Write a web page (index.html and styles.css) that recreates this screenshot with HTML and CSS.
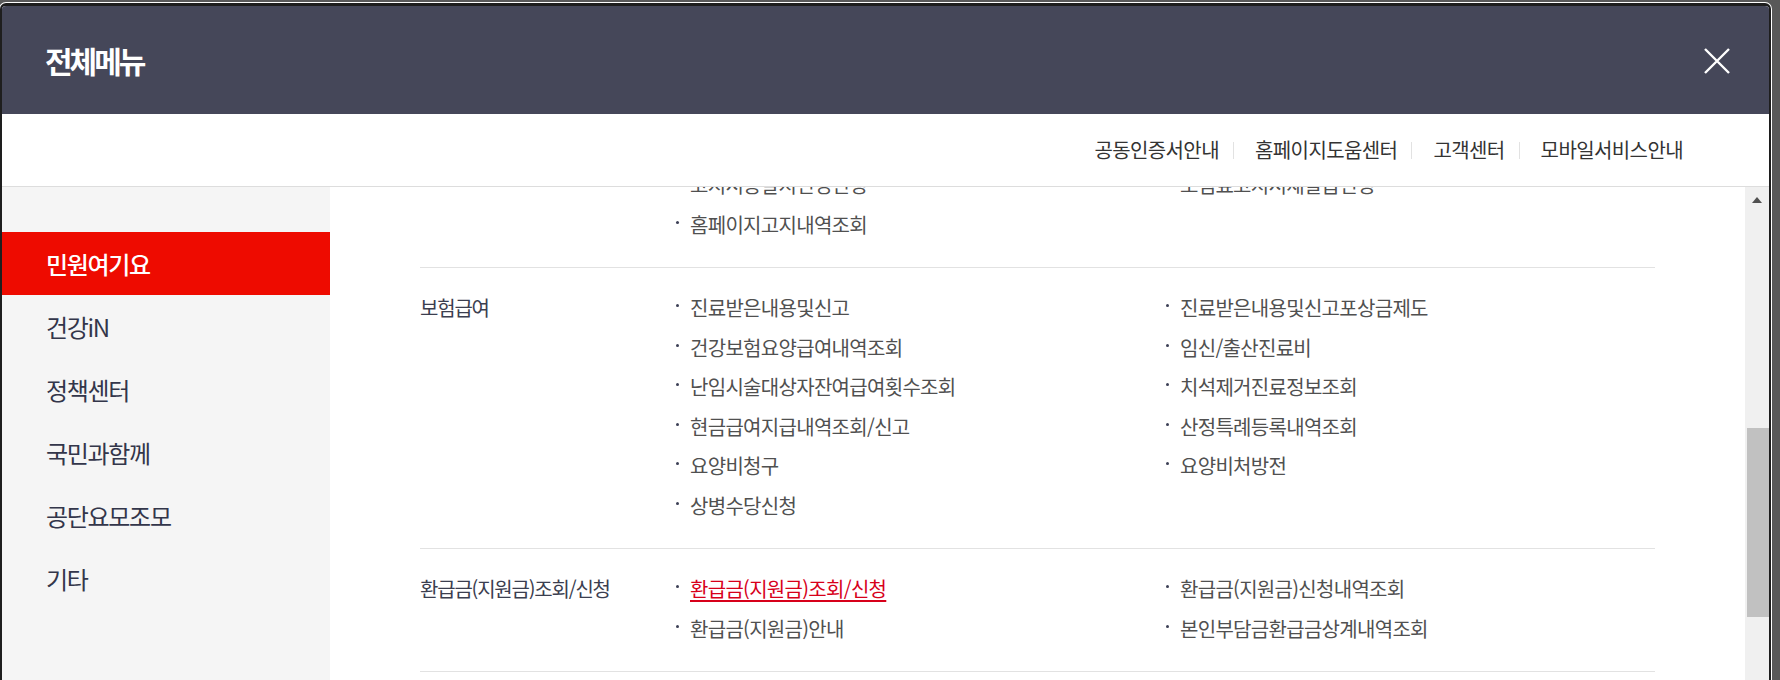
FILE: index.html
```html
<!DOCTYPE html>
<html lang="ko">
<head>
<meta charset="utf-8">
<title>전체메뉴</title>
<link rel="stylesheet" href="styles.css">
</head>
<body>
<div class="modal">
  <header class="modal-head">
    <h1 class="modal-title">전체메뉴</h1>
    <button class="close-btn" type="button" aria-label="닫기">
      <svg width="26" height="26" viewBox="0 0 26 26"><path d="M1 1L25 25M25 1L1 25" stroke="#fff" stroke-width="2.4" fill="none"/></svg>
    </button>
  </header>
  <nav class="util-bar">
    <a class="util-link">공동인증서안내</a><span class="sep"></span>
    <a class="util-link">홈페이지도움센터</a><span class="sep"></span>
    <a class="util-link">고객센터</a><span class="sep"></span>
    <a class="util-link">모바일서비스안내</a>
  </nav>
  <div class="modal-body">
    <aside class="side-nav">
      <ul>
        <li class="side-item active">민원여기요</li>
        <li class="side-item">건강iN</li>
        <li class="side-item">정책센터</li>
        <li class="side-item">국민과함께</li>
        <li class="side-item">공단요모조모</li>
        <li class="side-item">기타</li>
      </ul>
    </aside>
    <div class="menu-pane">
      <section class="menu-row first">
        <h2 class="row-label"></h2>
        <ul class="menu-col">
          <li>고지서송달지변경신청</li>
          <li>홈페이지고지내역조회</li>
        </ul>
        <ul class="menu-col">
          <li>보험료고지서재발급신청</li>
        </ul>
      </section>
      <section class="menu-row">
        <h2 class="row-label">보험급여</h2>
        <ul class="menu-col">
          <li>진료받은내용및신고</li>
          <li>건강보험요양급여내역조회</li>
          <li>난임시술대상자잔여급여횟수조회</li>
          <li>현금급여지급내역조회/신고</li>
          <li>요양비청구</li>
          <li>상병수당신청</li>
        </ul>
        <ul class="menu-col">
          <li>진료받은내용및신고포상금제도</li>
          <li>임신/출산진료비</li>
          <li>치석제거진료정보조회</li>
          <li>산정특례등록내역조회</li>
          <li>요양비처방전</li>
        </ul>
      </section>
      <section class="menu-row">
        <h2 class="row-label">환급금(지원금)조회/신청</h2>
        <ul class="menu-col">
          <li class="current">환급금(지원금)조회/신청</li>
          <li>환급금(지원금)안내</li>
        </ul>
        <ul class="menu-col">
          <li>환급금(지원금)신청내역조회</li>
          <li>본인부담금환급금상계내역조회</li>
        </ul>
      </section>
    </div>
    <div class="scrollbar">
      <span class="scroll-arrow"></span>
      <span class="scroll-thumb"></span>
    </div>
  </div>
</div>
</body>
</html>
```

FILE: styles.css
```css
* { box-sizing: border-box; }

html, body {
  margin: 0;
  padding: 0;
  height: 680px;
  overflow: hidden;
  background: #595959;
  font-family: "Noto Sans CJK KR", "Noto Sans", sans-serif;
}

ul { list-style: none; margin: 0; padding: 0; }

.modal {
  margin-top: 3px;
  width: 1771px;
  height: 720px;
  border: 2px solid #1e1e1e;
  border-top-width: 3px;
  border-radius: 6px 6px 0 0;
  box-shadow: 0 0 0 1px #ffffff;
  background: #fff;
  display: flex;
  flex-direction: column;
  overflow: hidden;
}

.modal-head {
  height: 108px;
  flex: none;
  background: #454759;
  display: flex;
  align-items: center;
  justify-content: space-between;
  padding: 0 39px 0 43px;
}

.modal-title {
  margin: 0;
  color: #fff;
  font-size: 30px;
  font-weight: 700;
  letter-spacing: -3px;
  line-height: 1;
}

.close-btn {
  display: block;
  width: 26px;
  height: 26px;
  padding: 0;
  border: 0;
  background: none;
  margin-top: 2px;
}
.close-btn svg { display: block; }

.util-bar {
  height: 73px;
  flex: none;
  display: flex;
  justify-content: flex-end;
  align-items: center;
  padding-right: 86px;
  border-bottom: 1px solid #dddddd;
}

.util-link {
  font-size: 20px;
  color: #333;
  letter-spacing: -0.6px;
  line-height: 1;
}

.sep {
  width: 1px;
  height: 17px;
  background: #e2e2e2;
  margin: 0 21px 0 14px;
}

.modal-body {
  flex: 1;
  display: flex;
  min-height: 0;
}

.side-nav {
  width: 328px;
  flex: none;
  background: #f5f5f5;
  padding-top: 45px;
}

.side-item {
  height: 63px;
  line-height: 63px;
  padding-left: 44px;
  font-size: 24px;
  letter-spacing: -1.3px;
  color: #33364a;
}

.side-item.active {
  background: #ee0b00;
  color: #fff;
  font-weight: 500;
}

.menu-pane {
  width: 1415px;
  flex: none;
  overflow: hidden;
  padding: 0 90px;
  background: #fff;
}

.menu-row {
  display: grid;
  grid-template-columns: 256px 490px 489px;
  padding: 20px 0 23px;
  border-bottom: 1px solid #e2e2e2;
}

.menu-row.first { margin-top: -42px; }

.row-label {
  margin: 0;
  font-size: 20px;
  font-weight: 400;
  line-height: 39.5px;
  letter-spacing: -1.2px;
  color: #3b3e4f;
}

.menu-col li {
  display: flex;
  align-items: center;
  height: 39.5px;
  font-size: 20px;
  letter-spacing: -0.7px;
  color: #505050;
}

.menu-col li::before {
  content: "";
  flex: none;
  width: 3px;
  height: 3px;
  border-radius: 50%;
  background: #3c3f55;
  margin: 0 11px 4px 0;
}

.menu-col li.current {
  color: #d7001a;
  text-decoration: underline;
  text-underline-offset: 3px;
  text-decoration-thickness: 2px;
}

.scrollbar {
  width: 24px;
  flex: none;
  background: #f0f0f0;
  display: flex;
  flex-direction: column;
}

.scroll-arrow {
  width: 0;
  height: 0;
  margin: 10px auto 0;
  border-left: 5px solid transparent;
  border-right: 5px solid transparent;
  border-bottom: 6px solid #505050;
}

.scroll-thumb {
  width: 22px;
  height: 189px;
  margin: 225px 0 0 2px;
  background: #c1c1c1;
}
```
